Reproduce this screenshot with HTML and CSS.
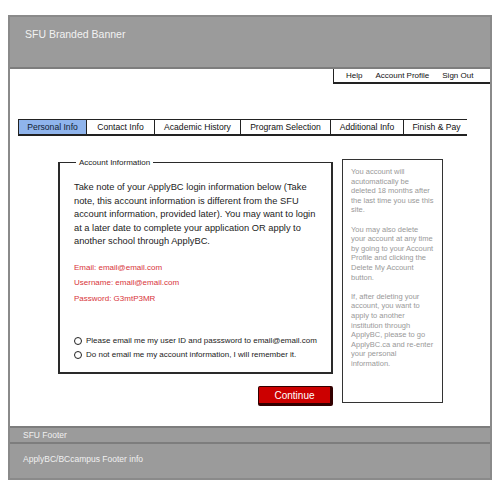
FILE: index.html
```html
<!DOCTYPE html>
<html lang="en">
<head>
    <meta charset="UTF-8">
    <title>ApplyBC - Account Information</title>
    <link rel="stylesheet" href="styles.css">
</head>
<body>
    <div class="frame">
        <div class="banner">SFU Branded Banner</div>

        <div class="toplinks">
            <div class="links">
                <span>Help</span>
                <span>Account Profile</span>
                <span>Sign Out</span>
            </div>
        </div>

        <div class="tabs">
            <div class="tab active">Personal Info</div>
            <div class="tab">Contact Info</div>
            <div class="tab">Academic History</div>
            <div class="tab">Program Selection</div>
            <div class="tab">Additional Info</div>
            <div class="tab">Finish &amp; Pay</div>
        </div>

        <div class="content">
            <div class="main">
                <fieldset class="account">
                    <legend>Account Information</legend>
                    <p class="intro">Take note of your ApplyBC login information below (Take note, this account information is different from the SFU account information, provided later). You may want to login at a later date to complete your application OR apply to another school through ApplyBC.</p>
                    <div class="creds">
                        <p>Email: email@email.com</p>
                        <p>Username: email@email.com</p>
                        <p>Password: G3mtP3MR</p>
                    </div>
                    <div class="options">
                        <label class="radio"><span class="dot"></span>Please email me my user ID and passsword to email@email.com</label>
                        <label class="radio"><span class="dot"></span>Do not email me my account information, I will remember it.</label>
                    </div>
                </fieldset>
                <div class="actions">
                    <button class="continue">Continue</button>
                </div>
            </div>

            <div class="sidebox">
                <p>You account will acutomatically be deleted 18 months after the last time you use this site.</p>
                <p>You may also delete your account at any time by going to your Account Profile and clicking the Delete My Account button.</p>
                <p>If, after deleting your account, you want to apply to another institution through ApplyBC, please to go ApplyBC.ca and re-enter your personal information.</p>
            </div>
        </div>

        <div class="footer-sfu">SFU Footer</div>
        <div class="footer-bc">ApplyBC/BCcampus Footer info</div>
    </div>
</body>
</html>
```

FILE: styles.css
```css
body {
    margin: 0;
    background: #fff;
    font-family: "Liberation Sans", Arial, sans-serif;
    color: #222;
}
p {
    margin: 0;
}
.frame {
    margin: 15px 8px 0 8px;
    width: 480px;
    border: 2px solid #8a8a8a;
    background: #fff;
}
.banner {
    height: 52px;
    background: #9b9b9b;
    color: #f2f2f2;
    font-size: 10.5px;
    padding: 11px 0 0 15px;
    box-sizing: border-box;
    border-bottom: 2px solid #7d7d7d;
}
.toplinks {
    display: flex;
    justify-content: flex-end;
}
.links {
    display: flex;
    gap: 13px;
    width: 157px;
    height: 15px;
    box-sizing: border-box;
    padding: 2px 0 0 12px;
    border-left: 1px solid #222;
    border-bottom: 2px solid #222;
    font-size: 8px;
    color: #111;
}
.tabs {
    display: flex;
    margin: 35px 0 0 8px;
    width: 449px;
    height: 17px;
    box-sizing: border-box;
    border: 1px solid #222;
    border-right-width: 3px;
    border-bottom-width: 2px;
}
.tab {
    flex: none;
    display: flex;
    align-items: center;
    justify-content: center;
    font-size: 8.6px;
    color: #111;
    border-left: 1px solid #222;
    background: #fff;
}
.tab:first-child { border-left: none; width: 67px; }
.tab:nth-child(2) { width: 67px; }
.tab:nth-child(3) { width: 85px; }
.tab:nth-child(4) { width: 89px; }
.tab:nth-child(5) { width: 72px; }
.tab:nth-child(6) { width: 65px; }
.tab.active {
    background: #8fb4ec;
    color: #123;
}
.content {
    display: flex;
    gap: 9px;
    padding: 22px 0 0 48px;
    height: 248px;
}
.main {
    width: 275px;
    display: flex;
    flex-direction: column;
}
.account {
    margin: 0;
    height: 216px;
    box-sizing: border-box;
    border: 2px solid #2a2a2a;
    border-top-width: 1px;
    padding: 14px 9px 0 14px;
    min-width: 0;
}
.account legend {
    font-size: 8px;
    color: #222;
    padding: 0 3px;
    margin-left: 2px;
}
.intro {
    font-size: 9.3px;
    line-height: 13.5px;
    color: #1c1c1c;
}
.creds {
    margin-top: 14px;
    display: flex;
    flex-direction: column;
    gap: 5px;
    font-size: 8px;
    line-height: 10.5px;
    color: #d8343a;
}
.options {
    margin-top: 32px;
    display: flex;
    flex-direction: column;
    gap: 4px;
}
.radio {
    display: flex;
    align-items: center;
    gap: 4px;
    font-size: 8px;
    line-height: 10px;
    color: #222;
}
.dot {
    width: 6px;
    height: 6px;
    border: 1.5px solid #222;
    border-radius: 50%;
}
.actions {
    display: flex;
    justify-content: flex-end;
    margin-top: 12px;
}
.continue {
    width: 75px;
    height: 20px;
    background: #cc0000;
    color: #fff;
    font-family: "Liberation Sans", Arial, sans-serif;
    font-size: 10px;
    border: 1px solid #300;
    border-right-width: 3px;
    border-bottom-width: 3px;
    border-radius: 2px;
    padding: 0;
}
.sidebox {
    width: 101px;
    height: 244px;
    margin-top: 1px;
    box-sizing: border-box;
    border: 1.5px solid #333;
    padding: 7px 7.2px 0 8px;
    font-size: 7.5px;
    line-height: 9.6px;
    color: #999;
}
.sidebox p {
    margin-bottom: 9.6px;
}
.footer-sfu {
    margin-top: 20px;
    height: 18px;
    box-sizing: border-box;
    background: #9b9b9b;
    border-top: 2px solid #7d7d7d;
    border-bottom: 2px solid #7d7d7d;
    color: #f0f0f0;
    font-size: 8.5px;
    padding: 2px 0 0 13px;
}
.footer-bc {
    height: 34px;
    box-sizing: border-box;
    background: #9b9b9b;
    color: #f0f0f0;
    font-size: 8.5px;
    padding: 10px 0 0 13px;
}
```
